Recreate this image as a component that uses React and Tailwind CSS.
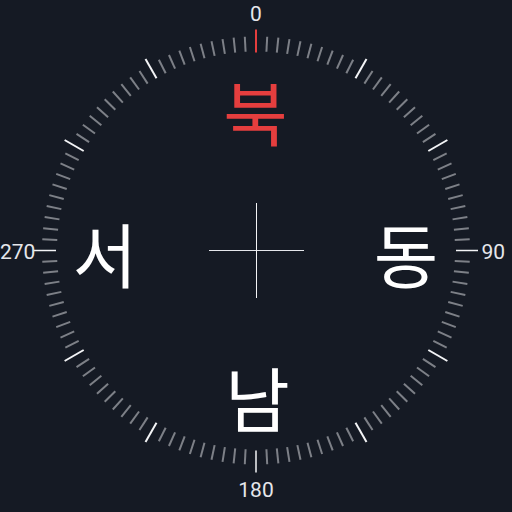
import React from "react";

const CX = 256;
const CY = 250.5;

const polar = (deg, r) => {
  const a = (deg * Math.PI) / 180;
  return [CX + r * Math.sin(a), CY - r * Math.cos(a)];
};

// 120 ticks, one every 3 degrees
const Dial = () => {
  const ticks = [];
  for (let i = 0; i < 120; i++) {
    const deg = i * 3;
    let r1 = 199;
    let r2 = 214;
    let color = "#7d8087";
    let width = 2;
    if (deg === 0) {
      r1 = 198;
      r2 = 221;
      color = "#e53e3e";
    } else if (deg % 90 === 0) {
      r1 = 200;
      r2 = 222;
      color = "#f3f4f6";
      width = 1.5;
    } else if (deg % 30 === 0) {
      r2 = 221;
      color = "#f3f4f6";
    }
    const [x1, y1] = polar(deg, r1);
    const [x2, y2] = polar(deg, r2);
    ticks.push(
      <line key={i} x1={x1} y1={y1} x2={x2} y2={y2} stroke={color} strokeWidth={width} />
    );
  }
  return (
    <svg className="absolute inset-0" width="512" height="512" viewBox="0 0 512 512">
      {ticks}
      <line x1="209" y1="250.5" x2="304" y2="250.5" stroke="#e5e7eb" strokeWidth="1" />
      <line x1="256.5" y1="203" x2="256.5" y2="298" stroke="#f3f4f6" strokeWidth="1" />
    </svg>
  );
};

export default function App() {
  return (
    <div className="relative w-[512px] h-[512px] overflow-hidden bg-[#151a24] font-['Roboto','Noto_Sans',sans-serif]">
      <Dial />

      {/* degree labels */}
      <div className="absolute inset-0 flex flex-col items-center justify-between pt-[4px] pb-[11px] text-[21px] leading-none text-gray-200">
        <span>0</span>
        <div className="w-full flex items-center justify-between pr-[7px]">
          <span>270</span>
          <span>90</span>
        </div>
        <span>180</span>
      </div>

      {/* cardinal letters */}
      <div className="absolute inset-0 grid grid-cols-[150px_151px_150px] grid-rows-[142px_142px_146px] place-items-center pl-[30px] pt-[40px] font-['Noto_Sans_CJK_KR',sans-serif] text-[70px] leading-none text-white">
        <span className="col-start-2 row-start-1 text-[#e53e3e]">북</span>
        <span className="col-start-1 row-start-2">서</span>
        <span className="col-start-3 row-start-2">동</span>
        <span className="col-start-2 row-start-3 ml-1">남</span>
      </div>
    </div>
  );
}
